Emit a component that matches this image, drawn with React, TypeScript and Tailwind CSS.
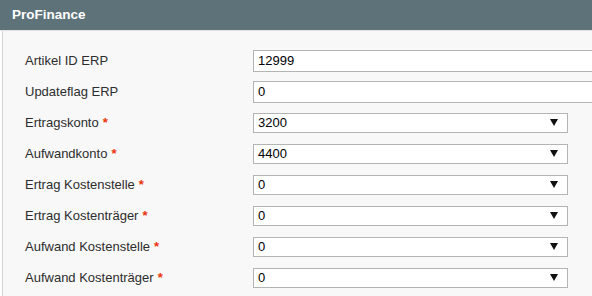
const FONT = "font-['Liberation_Sans',Arial,sans-serif]";

type Field = {
  label: string;
  value: string;
  required?: boolean;
  kind: 'text' | 'select';
};

const FIELDS: Field[] = [
  { label: 'Artikel ID ERP', value: '12999', kind: 'text' },
  { label: 'Updateflag ERP', value: '0', kind: 'text' },
  { label: 'Ertragskonto', value: '3200', required: true, kind: 'select' },
  { label: 'Aufwandkonto', value: '4400', required: true, kind: 'select' },
  { label: 'Ertrag Kostenstelle', value: '0', required: true, kind: 'select' },
  { label: 'Ertrag Kostenträger', value: '0', required: true, kind: 'select' },
  { label: 'Aufwand Kostenstelle', value: '0', required: true, kind: 'select' },
  { label: 'Aufwand Kostenträger', value: '0', required: true, kind: 'select' },
];

const SelectBox = ({ value }: { value: string }) => (
  <div className="flex h-[20px] w-[315px] items-center justify-between border border-[#b4b4b4] bg-white pl-[4px] pr-[9px] text-[13px] text-black">
    <span>{value}</span>
    <svg width="8" height="7" viewBox="0 0 8 7">
      <path d="M0 0H8L4 7Z" fill="#111" />
    </svg>
  </div>
);

const TextBox = ({ value }: { value: string }) => (
  <input
    readOnly
    value={value}
    className="h-[22px] w-[360px] shrink-0 border border-[#b4b4b4] bg-white px-[4px] text-[13px] text-black outline-none"
  />
);

export default function App() {
  return (
    <div className={`${FONT} h-[296px] w-[592px] overflow-hidden bg-white`}>
      <div className="flex h-[30px] items-center bg-[#5d7379] px-3 text-[13.5px] font-bold text-white">
        ProFinance
      </div>
      <div className="h-[1px] bg-[#e4e4e4]" />
      <div className="ml-[2px] h-full border-l border-[#d4d4d4] bg-[#f8f8f8] pt-[14px]">
        {FIELDS.map((f) => (
          <div key={f.label} className="flex h-[31px] items-center">
            <div className="w-[250px] shrink-0 pl-[22px] text-[13px] text-[#2d2d2d]">
              {f.label}
              {f.required && <span className="ml-[4px] font-bold text-[#eb340a]">*</span>}
            </div>
            {f.kind === 'text' ? <TextBox value={f.value} /> : <SelectBox value={f.value} />}
          </div>
        ))}
      </div>
    </div>
  );
}
